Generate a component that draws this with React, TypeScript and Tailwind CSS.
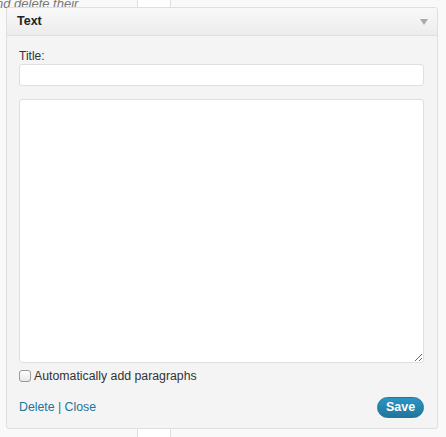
import React from "react";

export default function App() {
  return (
    <div
      className="relative w-[446px] h-[437px] overflow-hidden bg-[#f9f9f9]"
      style={{ fontFamily: '"Liberation Sans", Arial, sans-serif' }}
    >
      {/* underlying page */}
      <div className="absolute left-[137px] top-0 h-full w-[34px] border-x border-[#dfdfdf] bg-white" />
      <div className="absolute left-[-4px] top-[-4px] text-[13px] italic text-[#777] leading-[16px] whitespace-nowrap">
        nd delete their
      </div>

      {/* widget panel */}
      <div className="absolute left-[6px] top-[7px] w-[432px] h-[422px] flex flex-col border border-[#dfdfdf] rounded-[3px] bg-[#f4f4f4]">
        <div className="h-[28px] flex items-center justify-between px-[10px] border-b border-[#dfdfdf] bg-gradient-to-b from-[#f9f9f9] to-[#ececec] rounded-t-[3px]">
          <span className="text-[12.5px] font-bold text-[#222]">Text</span>
          <svg width="8" height="6" viewBox="0 0 8 6" className="mr-[-1px]">
            <path d="M0 0 H8 L4 6 Z" fill="#aaa" />
          </svg>
        </div>
        <div className="flex flex-col flex-1 pl-[12px] pr-[13px]">
          <label className="mt-[12px] text-[12px] leading-[16px] text-[#333]">Title:</label>
          <div className="h-[22px] rounded-[3px] border border-[#dfdfdf] bg-white" />
          <textarea
            className="block mt-[13px] h-[264px] resize-y rounded-[3px] border border-[#dfdfdf] bg-white outline-none"
            defaultValue=""
          />
          <div className="mt-[6px] flex items-center gap-[3px]">
            <span className="w-[12px] h-[12px] rounded-[3px] border border-[#999] bg-gradient-to-b from-[#fff] to-[#e8e8e8]" />
            <span className="text-[12.3px] leading-[14px] text-[#333]">Automatically add paragraphs</span>
          </div>
          <div className="mt-[14px] flex items-center justify-between">
            <div className="text-[12.3px] text-[#21759b]">
              Delete <span>|</span> Close
            </div>
            <button className="h-[21px] w-[47px] rounded-full border border-[#21759b] bg-gradient-to-b from-[#2a95c5] to-[#21759b] text-[12.5px] font-bold text-white">
              Save
            </button>
          </div>
        </div>
      </div>
    </div>
  );
}
